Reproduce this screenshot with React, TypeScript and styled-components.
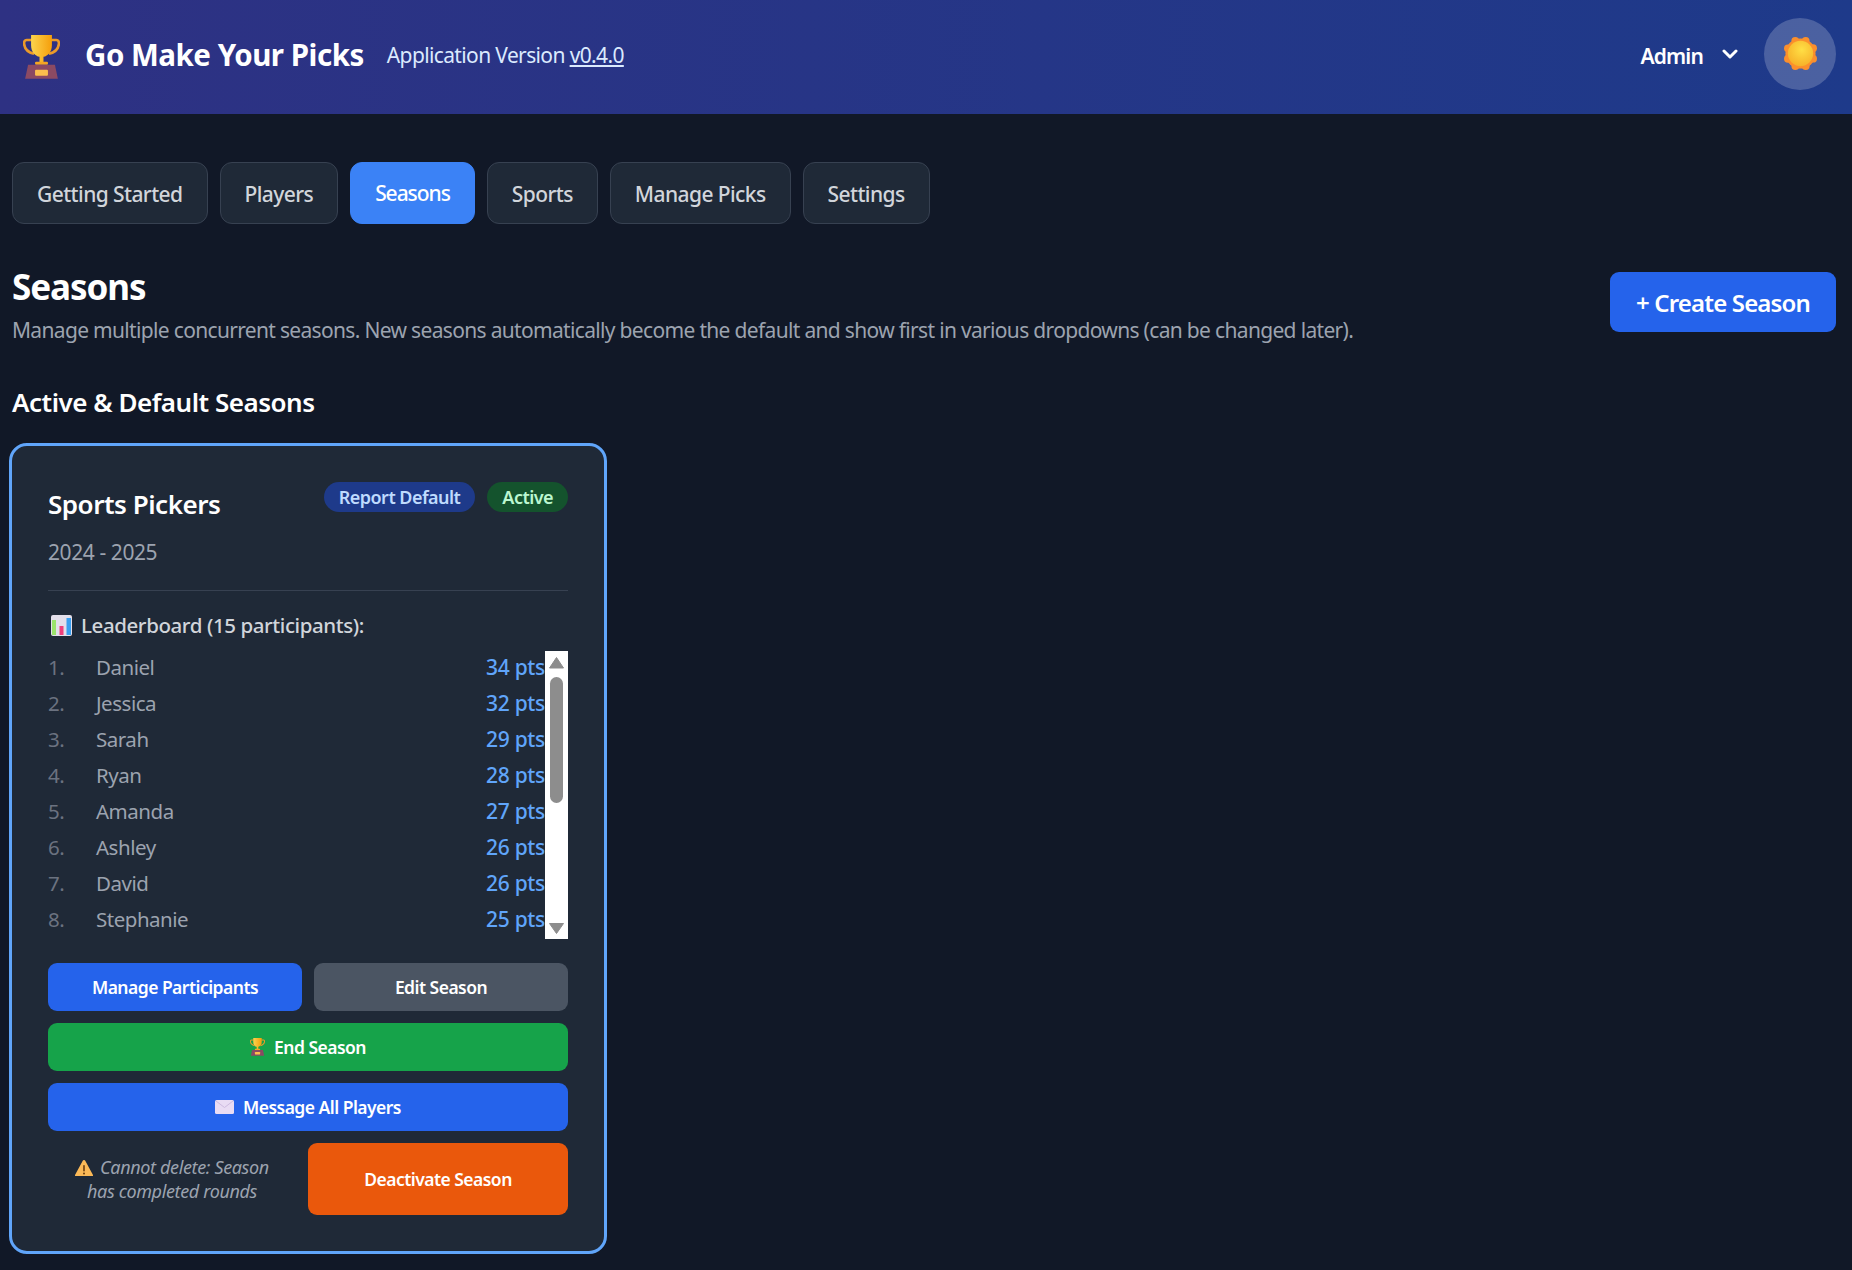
import React from "react";
import styled, { createGlobalStyle } from "styled-components";

const GlobalStyle = createGlobalStyle`
  * { box-sizing: border-box; }
  body {
    margin: 0;
    background: #111827;
    color: #fff;
    font-family: "Noto Sans", "Open Sans", sans-serif;
    letter-spacing: -0.03em;
  }
  button { font-family: inherit; }
`;

const players = [
  ["Daniel", 34], ["Jessica", 32], ["Sarah", 29], ["Ryan", 28],
  ["Amanda", 27], ["Ashley", 26], ["David", 26], ["Stephanie", 25],
] as const;

const tabs = ["Getting Started", "Players", "Seasons", "Sports", "Manage Picks", "Settings"];

const Header = styled.header`
  height: 114px;
  padding: 0 16px 0 23px;
  display: flex;
  align-items: center;
  background: linear-gradient(90deg, #2e3183, #1e3a8a);
`;

const Title = styled.h1`
  margin: 0 0 6px 25px;
  font-size: 29.500px;
  font-weight: 700;
`;

const Version = styled.span`
  margin: 0 0 5px 23px;
  font-size: 21px;
  letter-spacing: -0.03em;
  color: #dbeafe;
  a { color: inherit; text-decoration: underline; }
`;

const UserArea = styled.div`
  margin: 0 0 7px auto;
  display: flex;
  align-items: center;
`;

const UserName = styled.span`
  margin: 4px 19px 0 0;
  font-size: 21px;
  font-weight: 600;
  letter-spacing: -0.04em;
`;

const Avatar = styled.div`
  width: 72px;
  height: 72px;
  margin-left: 26px;
  border-radius: 50%;
  background: rgba(255, 255, 255, 0.2);
  display: flex;
  align-items: center;
  justify-content: center;
`;

const Main = styled.main`
  padding: 48px 16px 0 12px;
`;

const TabBar = styled.nav`
  display: flex;
  gap: 12px;
`;

const Tab = styled.button<{ $active?: boolean }>`
  height: 62px;
  padding: ${(p) => (p.$active ? "0 24px" : "2px 24px 0")};
  border-radius: 12px;
  font-size: 21px;
  letter-spacing: ${(p) => (p.$active ? "-0.05em" : "-0.028em")};
  font-weight: 500;
  color: ${(p) => (p.$active ? "#fff" : "#d1d5db")};
  background: ${(p) => (p.$active ? "#3b82f6" : "#1f2937")};
  border: 1px solid ${(p) => (p.$active ? "#3b82f6" : "#374151")};
`;

const PageHead = styled.div`
  margin-top: 36px;
  display: flex;
  justify-content: space-between;
  align-items: flex-start;
`;

const PageIntro = styled.div`
  padding-top: 3px;
`;

const PageTitle = styled.h2`
  margin: 0;
  font-size: 35px;
  line-height: 48px;
  font-weight: 700;
  letter-spacing: -0.03em;
`;

const PageText = styled.p`
  margin: 3px 0 0;
  font-size: 21px;
  line-height: 32px;
  letter-spacing: -0.032em;
  color: #9ca3af;
`;

const CreateButton = styled.button`
  flex: 0 0 226px;
  height: 60px;
  margin-top: 12px;
  border: 0;
  border-radius: 9px;
  background: #2563eb;
  color: #fff;
  font-size: 24px;
  font-weight: 600;
  letter-spacing: -0.035em;
`;

const SectionTitle = styled.h3`
  margin: 38px 0 0;
  font-size: 26px;
  line-height: 36px;
  font-weight: 600;
`;

const Card = styled.section`
  width: 598px;
  margin: 23px 0 0 -3px;
  padding: 36px;
  border: 3px solid #60a5fa;
  border-radius: 18px;
  background: #1f2937;
`;

const CardTop = styled.div`
  display: flex;
  justify-content: space-between;
  align-items: flex-start;
`;

const CardTitle = styled.h4`
  margin: 0;
  font-size: 26px;
  line-height: 44px;
  font-weight: 600;
`;

const Badges = styled.div`
  display: flex;
  gap: 12px;
`;

const Badge = styled.span<{ $tone: "blue" | "green" }>`
  height: 30px;
  padding: 0 15px;
  border-radius: 15px;
  font-size: 18px;
  line-height: 30px;
  font-weight: 600;
  letter-spacing: -0.03em;
  color: ${(p) => (p.$tone === "blue" ? "#bfdbfe" : "#bbf7d0")};
  background: ${(p) => (p.$tone === "blue" ? "#1e3a8a" : "#14532d")};
`;

const Dates = styled.div`
  margin-top: 10px;
  font-size: 21px;
  line-height: 32px;
  letter-spacing: -0.02em;
  color: #9ca3af;
`;

const Divider = styled.hr`
  margin: 22px 0 0;
  border: 0;
  border-top: 1.500px solid #374151;
`;

const BoardLabel = styled.div`
  margin-top: 19px;
  display: flex;
  align-items: center;
  gap: 9px;
  padding-left: 3px;
  font-size: 20.500px;
  line-height: 30px;
  font-weight: 500;
  letter-spacing: -0.02em;
  color: #d1d5db;
`;

const Board = styled.div`
  margin-top: 11px;
  display: flex;
`;

const BoardList = styled.div`
  flex: 1;
`;

const BoardRow = styled.div`
  height: 36px;
  display: flex;
  align-items: center;
  padding-bottom: 4px;
  font-size: 20.500px;
`;

const Rank = styled.span`
  width: 48px;
  color: #6b7280;
`;

const PlayerName = styled.span`
  flex: 1;
  color: #9ca3af;
`;

const Points = styled.span`
  color: #60a5fa;
  font-size: 21px;
  font-weight: 500;
  letter-spacing: -0.015em;
`;

const ScrollTrack = styled.div`
  flex: 0 0 23px;
  height: 288px;
  background: #fff;
  display: flex;
  flex-direction: column;
  align-items: center;
  justify-content: space-between;
`;

const ScrollArrow = styled.svg`
  height: 26px;
  width: 23px;
`;

const ScrollThumb = styled.div`
  width: 13px;
  height: 126px;
  margin-bottom: auto;
  border-radius: 7px;
  background: #8d8d8d;
`;

const Actions = styled.div`
  margin-top: 24px;
  display: flex;
  flex-direction: column;
  gap: 12px;
`;

const ActionRow = styled.div`
  display: flex;
  gap: 12px;
`;

const colours = { blue: "#2563eb", gray: "#4b5563", green: "#16a34a", orange: "#ea580c" };

const ActionButton = styled.button<{ $colour: keyof typeof colours }>`
  flex: 1;
  height: 48px;
  border: 0;
  border-radius: 9px;
  display: flex;
  align-items: center;
  justify-content: center;
  gap: 9px;
  background: ${(p) => colours[p.$colour]};
  color: #fff;
  font-size: 17.500px;
  font-weight: 600;
  letter-spacing: -0.03em;
`;

const DeactivateButton = styled(ActionButton)`
  flex: 0 0 260px;
  height: 72px;
`;

const DeleteNote = styled.div`
  flex: 1;
  align-self: center;
  padding: 0 20px;
  text-align: center;
  font-size: 18px;
  line-height: 24px;
  font-style: italic;
  letter-spacing: -0.02em;
  color: #9ca3af;
  svg { vertical-align: -2px; margin-right: 7px; }
`;

const Trophy = ({ size }: { size: number }) => (
  <svg width={size} height={size * 1.18} viewBox="0 0 37 44" style={{ flexShrink: 0 }}>
    <defs>
      <linearGradient id="cup" x1="0" y1="0" x2="1" y2="0">
        <stop offset="0" stopColor="#fcd34d" />
        <stop offset="1" stopColor="#f59e0b" />
      </linearGradient>
    </defs>
    <path d="M9 5H3.500C1.500 5 .8 7 1 9c.5 5 4 8.500 10 10" fill="none" stroke="#eb9a2a" strokeWidth="2.600" />
    <path d="M28 5h5.500c2 0 2.700 2 2.500 4-.5 5-4 8.500-10 10" fill="none" stroke="#eb9a2a" strokeWidth="2.600" />
    <path d="M8 0h21v10c0 7-4 11-8.500 12v6h-4v-6C12 21 8 17 8 10z" fill="url(#cup)" />
    <rect x="12" y="27" width="13" height="3" rx="1" fill="#f5a623" />
    <path d="M5 30h27l3 14H2z" fill="#8b4a63" />
    <rect x="12" y="35" width="13" height="6" rx="1" fill="#fbbf4d" />
  </svg>
);

const Sun = () => (
  <svg width="35" height="35" viewBox="0 0 36 36">
    <defs>
      <radialGradient id="core" cx="0.55" cy="0.35" r="0.8">
        <stop offset="0" stopColor="#ffdf45" />
        <stop offset="1" stopColor="#f4a723" />
      </radialGradient>
    </defs>
    <g fill="#fb8f2c">
      <circle cx="18" cy="18" r="15.500" />
      {[0, 45, 90, 135, 180, 225, 270, 315].map((a) => (
        <circle
          key={a}
          cx={18 + 14 * Math.cos((a * Math.PI) / 180 + 0.39)}
          cy={18 + 14 * Math.sin((a * Math.PI) / 180 + 0.39)}
          r="4"
        />
      ))}
    </g>
    <circle cx="18" cy="18" r="13" fill="url(#core)" />
  </svg>
);

const ChartIcon = () => (
  <svg width="21" height="21" viewBox="0 0 21 21">
    <rect width="21" height="21" rx="2" fill="#e3dfeb" />
    <rect x="1" y="5" width="4" height="15" fill="#9be36b" />
    <rect x="8.500" y="11" width="4" height="9" fill="#ef3f7b" />
    <rect x="15.500" y="3" width="4.500" height="17" fill="#3aa0f0" />
  </svg>
);

const MailIcon = () => (
  <svg width="19" height="14" viewBox="0 0 19 14">
    <rect width="19" height="14" rx="1.500" fill="#e9dcf4" />
    <path d="M1 1l8.500 6.500L18 1" fill="none" stroke="#cdbbe0" strokeWidth="1" />
  </svg>
);

const WarnIcon = () => (
  <svg width="18" height="16" viewBox="0 0 18 16">
    <path d="M9 0c.7 0 1.100.4 1.400 1L18 15c.2.500 0 1-.6 1H.6C0 16-.2 15.500 0 15L7.600 1C7.900.4 8.300 0 9 0z" fill="#fbb957" />
    <rect x="8.200" y="5" width="1.600" height="6.500" rx=".8" fill="#6b3d10" />
    <circle cx="9" cy="13.500" r="1" fill="#6b3d10" />
  </svg>
);

const Chevron = () => (
  <svg width="16" height="10" viewBox="0 0 16 10" fill="none" stroke="#fff" strokeWidth="3" strokeLinecap="round" strokeLinejoin="round">
    <path d="M2 2l6 6 6-6" />
  </svg>
);

const App = () => {
  return (
    <>
      <GlobalStyle />
      <Header>
        <Trophy size={37} />
        <Title>Go Make Your Picks</Title>
        <Version>
          Application Version <a href="#version">v0.4.0</a>
        </Version>
        <UserArea>
          <UserName>Admin</UserName>
          <Chevron />
          <Avatar>
            <Sun />
          </Avatar>
        </UserArea>
      </Header>
      <Main>
        <TabBar>
          {tabs.map((tab) => (
            <Tab key={tab} $active={tab === "Seasons"}>
              {tab}
            </Tab>
          ))}
        </TabBar>
        <PageHead>
          <PageIntro>
            <PageTitle>Seasons</PageTitle>
            <PageText>
              Manage multiple concurrent seasons. New seasons automatically become the default and show first in various dropdowns (can be changed later).
            </PageText>
          </PageIntro>
          <CreateButton>+ Create Season</CreateButton>
        </PageHead>
        <SectionTitle>Active &amp; Default Seasons</SectionTitle>
        <Card>
          <CardTop>
            <CardTitle>Sports Pickers</CardTitle>
            <Badges>
              <Badge $tone="blue">Report Default</Badge>
              <Badge $tone="green">Active</Badge>
            </Badges>
          </CardTop>
          <Dates>2024 - 2025</Dates>
          <Divider />
          <BoardLabel>
            <ChartIcon />
            Leaderboard (15 participants):
          </BoardLabel>
          <Board>
            <BoardList>
              {players.map(([name, pts], i) => (
                <BoardRow key={name}>
                  <Rank>{i + 1}.</Rank>
                  <PlayerName>{name}</PlayerName>
                  <Points>{pts} pts</Points>
                </BoardRow>
              ))}
            </BoardList>
            <ScrollTrack>
              <ScrollArrow viewBox="0 0 23 26">
                <path d="M11.500 6.500L18.500 17H4.500z" fill="#8d8d8d" stroke="#8d8d8d" strokeLinejoin="round" />
              </ScrollArrow>
              <ScrollThumb />
              <ScrollArrow viewBox="0 0 23 26">
                <path d="M4.500 10.500h14l-7 10z" fill="#8d8d8d" stroke="#8d8d8d" strokeLinejoin="round" />
              </ScrollArrow>
            </ScrollTrack>
          </Board>
          <Actions>
            <ActionRow>
              <ActionButton $colour="blue">Manage Participants</ActionButton>
              <ActionButton $colour="gray">Edit Season</ActionButton>
            </ActionRow>
            <ActionRow>
              <ActionButton $colour="green">
                <Trophy size={15} />
                End Season
              </ActionButton>
            </ActionRow>
            <ActionRow>
              <ActionButton $colour="blue">
                <MailIcon />
                Message All Players
              </ActionButton>
            </ActionRow>
            <ActionRow>
              <DeleteNote>
                <WarnIcon />
                Cannot delete: Season has completed rounds
              </DeleteNote>
              <DeactivateButton $colour="orange">Deactivate Season</DeactivateButton>
            </ActionRow>
          </Actions>
        </Card>
      </Main>
    </>
  );
};

export default App;
